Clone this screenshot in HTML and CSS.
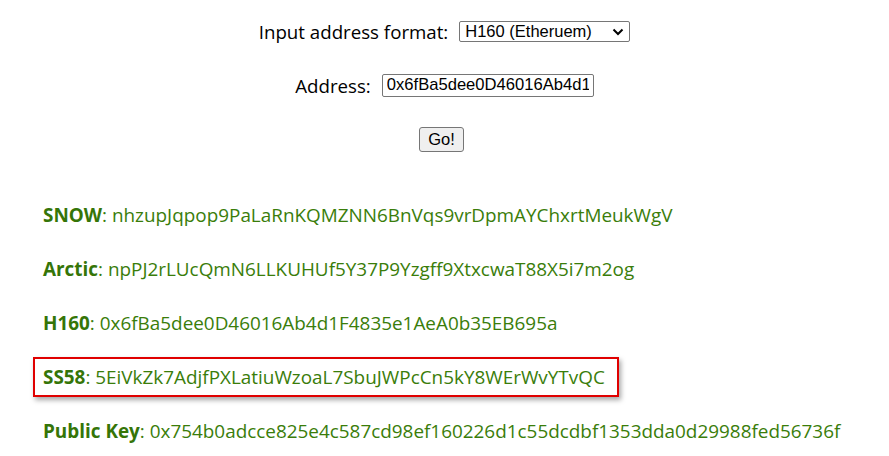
FILE: index.html
```html
<!DOCTYPE html>
<html lang="en">
<head>
<meta name="viewport" content="width=device-width, initial-scale=1">
<title>Address converter</title>
<link rel="stylesheet" href="styles.css">
</head>
<body>

<form class="lookup" onsubmit="return false">
  <div class="row">
    <label for="format">Input address format:</label>
    <div class="select-wrap">
      <select id="format" class="format">
        <option>H160 (Etheruem)</option>
        <option>SS58</option>
        <option>SNOW</option>
        <option>Arctic</option>
      </select>
      <svg class="chevron" width="12" height="8" viewBox="0 0 12 8"><path d="M1.5 1.5 L6 6 L10.5 1.5" fill="none" stroke="#000" stroke-width="2"/></svg>
    </div>
  </div>
  <div class="row">
    <label for="address">Address:</label>
    <input type="text" id="address" class="address" value="0x6fBa5dee0D46016Ab4d1F4835e1AeA0b35EB695a">
  </div>
  <div class="row">
    <button type="submit" class="go">Go!</button>
  </div>
</form>

<div class="results">
  <div class="result"><b>SNOW</b>: nhzupJqpop9PaLaRnKQMZNN6BnVqs9vrDpmAYChxrtMeukWgV</div>
  <div class="result"><b>Arctic</b>: npPJ2rLUcQmN6LLKUHUf5Y37P9Yzgff9XtxcwaT88X5i7m2og</div>
  <div class="result"><b>H160</b>: 0x6fBa5dee0D46016Ab4d1F4835e1AeA0b35EB695a</div>
  <div class="result selected"><b>SS58</b>: 5EiVkZk7AdjfPXLatiuWzoaL7SbuJWPcCn5kY8WErWvYTvQC</div>
  <div class="result"><b>Public Key</b>: 0x754b0adcce825e4c587cd98ef160226d1c55dcdbf1353dda0d29988fed56736f</div>
</div>

</body>
</html>
```

FILE: styles.css
```css
body {
  font-family: "Open Sans", "Noto Sans", sans-serif;
  margin: 8px;
  color: #000;
  background: #fff;
}

.lookup {
  display: flex;
  flex-direction: column;
  gap: 30px;
  padding-top: 11px;
}

.row {
  height: 24px;
  display: flex;
  justify-content: center;
  align-items: center;
  gap: 11px;
  font-size: 18.7px;
}

.select-wrap {
  position: relative;
  display: flex;
}

.format {
  appearance: none;
  font-family: "Liberation Sans", Arial, sans-serif;
  font-size: 16.5px;
  color: #000;
  width: 171px;
  height: 21px;
  padding: 0 0 0 5px;
  border: 1px solid #767676;
  border-radius: 2px;
  background: #fff;
}

.chevron {
  position: absolute;
  right: 6px;
  top: 7px;
  pointer-events: none;
}

.address {
  font-family: "Liberation Sans", Arial, sans-serif;
  font-size: 16.6px;
  width: 212px;
  height: 23px;
  box-sizing: border-box;
  padding: 1px 4px;
  border: 1px solid #767676;
  border-radius: 2px;
}

.go {
  font-family: "Liberation Sans", Arial, sans-serif;
  font-size: 16.5px;
  color: #000;
  width: 45px;
  height: 25px;
  padding: 0;
  border: 1px solid #767676;
  border-radius: 3px;
  background: #efefef;
  margin-right: 6px;
}

.results {
  display: flex;
  flex-direction: column;
  align-items: flex-start;
  gap: 14px;
  margin-top: 44px;
  padding-left: 25px;
}

.result {
  font-size: 18.9px;
  line-height: 24px;
  color: #3a7d0a;
  padding: 6px 8px;
  border: 2px solid transparent;
}

.result b {
  font-weight: 700;
  color: #357508;
}

.selected {
  padding-right: 12px;
  border-color: #e00000;
  box-shadow: 2px 3px 5px rgba(0, 0, 0, 0.35);
}
```
